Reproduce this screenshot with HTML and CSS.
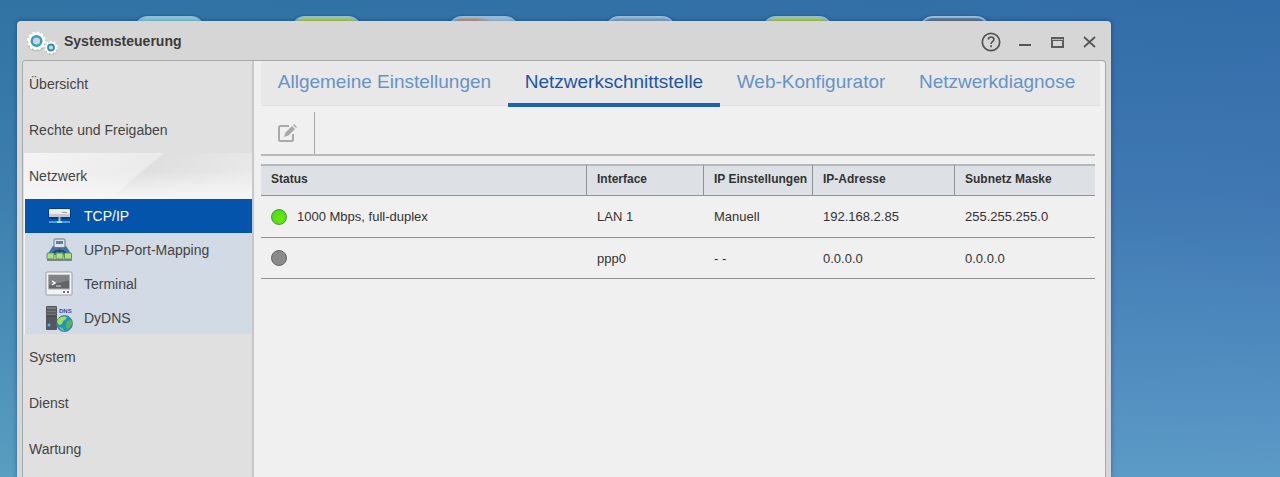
FILE: index.html
```html
<!DOCTYPE html>
<html lang="de">
<head>
  <meta charset="UTF-8" />
  <meta name="viewport" content="width=device-width, initial-scale=1.0"/>
  <title>Systemsteuerung</title>
  <link rel="stylesheet" href="styles.css">
</head>
<body>
  <div class="desktop">
    <!-- Desktop shortcuts, mostly hidden behind the window -->
    <div class="shortcuts">
      <span class="shortcut teal"></span>
      <span class="shortcut green"></span>
      <span class="shortcut orange"></span>
      <span class="shortcut steel"></span>
      <span class="shortcut green"></span>
      <span class="shortcut dark"></span>
    </div>

    <div class="window">
      <header class="titlebar">
        <svg class="app-icon" width="32" height="26" viewBox="0 0 32 26">
          <g class="gear-shadow">
            <circle cx="10.5" cy="12" r="9.5" />
            <circle cx="25" cy="18.5" r="6.5" />
          </g>
          <circle cx="10.5" cy="11" r="8.5" fill="none" stroke="#fff" stroke-width="2" stroke-dasharray="2.5 1.95" />
          <circle cx="10.5" cy="11" r="6" fill="#d6cfe0" stroke="#fff" stroke-width="5" />
          <circle cx="10.5" cy="11" r="4.8" fill="#d6cfe0" stroke="#2fa3b5" stroke-width="2.4" />
          <circle cx="25" cy="17.5" r="5.8" fill="none" stroke="#fff" stroke-width="2" stroke-dasharray="2 1.64" />
          <circle cx="25" cy="17.5" r="4" fill="#d6cfe0" stroke="#fff" stroke-width="3" />
          <circle cx="25" cy="17.5" r="3" fill="#d6cfe0" stroke="#2b93aa" stroke-width="1.8" />
        </svg>
        <h1>Systemsteuerung</h1>
        <div class="window-buttons">
          <button type="button" aria-label="Hilfe">
            <svg width="20" height="20" viewBox="0 0 20 20" fill="none" stroke="#555" stroke-width="1.7">
              <circle cx="10" cy="10" r="8.7" />
              <path d="M7.2 7.5C7.5 5.7 8.6 5 10.1 5c1.7 0 2.8 1 2.8 2.4 0 2.2-2.8 2.3-2.8 4.5" />
              <path d="M10.1 13.3v2" />
            </svg>
          </button>
          <button type="button" aria-label="Minimieren">
            <svg width="14" height="14" viewBox="0 0 14 14"><path d="M0 9h12v2H0z" fill="#555" /></svg>
          </button>
          <button type="button" aria-label="Maximieren">
            <svg width="14" height="14" viewBox="0 0 14 14"><path d="M0 2h13v11H0zM2 6v5h9V6z" fill="#5c5c5c" fill-rule="evenodd" /><path d="M1 4.5h11" stroke="#bbb" /></svg>
          </button>
          <button type="button" aria-label="Schließen">
            <svg width="14" height="14" viewBox="0 0 14 14"><path d="M1 2l11 10M12 2L1 12" stroke="#555" stroke-width="1.7" /></svg>
          </button>
        </div>
      </header>

      <div class="content">
        <nav class="sidebar">
          <a href="#" class="group">Übersicht</a>
          <a href="#" class="group">Rechte und Freigaben</a>
          <a href="#" class="group open">Netzwerk</a>
          <div class="submenu">
            <a href="#" class="item active">
              <svg width="28" height="28" viewBox="0 0 28 28">
                <rect x="3" y="6" width="23" height="11" rx="3" fill="#082c5a" opacity=".6" />
                <rect x="4" y="7" width="21" height="8" rx="1" fill="#ececef" />
                <path d="M4 12h21v3H4z" fill="#c6c8ce" />
                <path d="M17 10.5h5" stroke="#999" />
                <path d="M14.5 15v4" stroke="#8cc6ee" stroke-width="2" />
                <path d="M4 20h8M17 20h8" stroke="#63b5ee" stroke-width="1.5" />
                <path d="M12 20h5" stroke="#b9dcf2" stroke-width="2" />
              </svg>
              TCP/IP
            </a>
            <a href="#" class="item">
              <svg width="28" height="28" viewBox="0 0 28 28">
                <path d="M8 10h13l6 9H2z" fill="#3c74a8" />
                <path d="M14.5 11v8M6 19l5-4h7l5 4" fill="none" stroke="#17446f" stroke-width="1.5" />
                <rect x="9" y="3" width="11" height="9" rx="1" fill="#dce5ed" stroke="#66798b" />
                <rect x="11" y="5" width="7" height="3" fill="#5780aa" />
                <path d="M8 12h13" stroke="#536d84" stroke-width="1.5" />
                <path d="M2 24h25" stroke="#78858d" stroke-width="2" />
                <g fill="#a7e67c" stroke="#66885f">
                  <rect x="2" y="17" width="7" height="6" rx="1" />
                  <rect x="11" y="17" width="7" height="6" rx="1" />
                  <rect x="19.5" y="17" width="7" height="6" rx="1" />
                </g>
              </svg>
              UPnP-Port-Mapping
            </a>
            <a href="#" class="item">
              <svg width="28" height="28" viewBox="0 0 28 28">
                <rect x="1" y="2" width="26" height="23" rx="1" fill="#f3f3f5" stroke="#9a9ea6" />
                <rect x="3.5" y="5" width="21" height="14" fill="#626468" stroke="#acaeb2" />
                <path d="M4 5.5h20v5L4 15z" fill="#808286" />
                <path d="M7 11l3 2-3 2" fill="none" stroke="#fff" stroke-width="1.5" />
                <path d="M11 16h5" stroke="#ddd" />
                <path d="M18 22h2M22 22h2" stroke="#806b78" stroke-width="2" />
              </svg>
              Terminal
            </a>
            <a href="#" class="item">
              <svg width="28" height="28" viewBox="0 0 28 28">
                <rect x="1" y="2" width="11" height="24" rx="1" fill="#55575b" />
                <path d="M2 3h9v8H2z" fill="#77797d" />
                <path d="M2 6h9M2 9h9M2 12h9" stroke="#424448" />
                <circle cx="4" cy="21" r="1.5" fill="#43b6ff" />
                <circle cx="19.5" cy="19.5" r="8" fill="#2394bd" stroke="#41738c" stroke-width=".8" />
                <path d="M13 15c3-3 7-3 9-2l-2 3-2 1-1 3-3 1-2-3z" fill="#a5df54" />
                <path d="M22 17l4-1 1 4-4 6-2-3z" fill="#56b954" />
                <path d="M14 23l4 1 1 3c-2 0-4-2-5-4z" fill="#5ecb92" />
                <text x="14" y="9" class="dns">DNS</text>
              </svg>
              DyDNS
            </a>
          </div>
          <a href="#" class="group">System</a>
          <a href="#" class="group">Dienst</a>
          <a href="#" class="group">Wartung</a>
        </nav>

        <main class="panel">
          <nav class="tabs">
            <a href="#">Allgemeine Einstellungen</a>
            <a href="#" class="active">Netzwerkschnittstelle</a>
            <a href="#">Web-Konfigurator</a>
            <a href="#">Netzwerkdiagnose</a>
          </nav>

          <div class="toolbar">
            <button type="button" aria-label="Bearbeiten">
              <svg width="20" height="20" viewBox="0 0 20 20">
                <path d="M12 3H3.500Q2 3 2 4.500v12Q2 18 3.500 18h11q1.500 0 1.500-1.500V11" fill="none" stroke="#aaa" stroke-width="2" />
                <path d="M7 14l1.500-4.500L15 3l3 3-6.500 6.500z" fill="#a8a8a8" />
                <path d="M16 2l1-1 3 3-1 1z" fill="#a8a8a8" />
              </svg>
            </button>
          </div>

          <table>
            <colgroup>
              <col><col class="col-interface"><col class="col-settings"><col class="col-address"><col class="col-mask">
            </colgroup>
            <thead>
              <tr>
                <th>Status</th>
                <th>Interface</th>
                <th>IP Einstellungen</th>
                <th>IP-Adresse</th>
                <th>Subnetz Maske</th>
              </tr>
            </thead>
            <tbody>
              <tr>
                <td><div class="state"><span class="led on"></span>1000 Mbps, full-duplex</div></td>
                <td>LAN 1</td>
                <td>Manuell</td>
                <td>192.168.2.85</td>
                <td>255.255.255.0</td>
              </tr>
              <tr>
                <td><div class="state"><span class="led"></span></div></td>
                <td>ppp0</td>
                <td>- -</td>
                <td>0.0.0.0</td>
                <td>0.0.0.0</td>
              </tr>
            </tbody>
          </table>
        </main>
      </div>
    </div>
  </div>
</body>
</html>
```
FILE: styles.css
```css
* {
  margin: 0;
  padding: 0;
  box-sizing: border-box;
}

body {
  font-family: "Liberation Sans", Arial, sans-serif;
  font-size: 14px;
  color: #444;
}

a {
  color: inherit;
  text-decoration: none;
}

button {
  border: none;
  background: none;
  cursor: pointer;
}

svg {
  display: block;
}

.desktop {
  position: relative;
  display: flex;
  height: 100vh;
  padding: 21px 169px 0 17px;
  overflow: hidden;
  background: linear-gradient(90deg, rgba(50, 140, 160, 0.25), rgba(60, 110, 180, 0.2)), linear-gradient(#306ca5, #4079b2 40%, #64a5cc);
}

.shortcuts {
  position: absolute;
  top: 16px;
  left: 134px;
  display: flex;
  gap: 86px;
}

.shortcut {
  width: 71px;
  height: 71px;
  border: 2px solid #8fc3e6;
  border-radius: 14px;
  box-shadow: 0 0 3px rgba(0, 40, 80, 0.4);
}

.teal {
  background: #8acfd6;
}

.green {
  background: #b0d262;
}

.orange {
  background: linear-gradient(90deg, #b9a096 40%, #a9c3de 60%);
}

.steel {
  background: #8eabc4;
}

.dark {
  background: #687b90;
}

.window {
  position: relative;
  display: flex;
  flex-direction: column;
  flex: 1;
  padding: 0 5px;
  border-radius: 4px 4px 0 0;
  background: #d6d6d6;
  box-shadow: 0 0 5px rgba(0, 20, 50, 0.4);
}

.titlebar {
  display: flex;
  align-items: center;
  height: 39px;
  padding: 0 9px 0 4px;
}

.titlebar h1 {
  margin-left: 6px;
  font-size: 14px;
  color: #3c3c3c;
}

.app-icon {
  margin-top: 4px;
}

.gear-shadow {
  fill: #8d9598;
  opacity: 0.4;
}

.window-buttons {
  display: flex;
  align-items: center;
  gap: 18px;
  margin-left: auto;
  margin-top: 2px;
}

.content {
  display: flex;
  flex: 1;
  border: 1px solid #a8a8a8;
  border-bottom: none;
  border-radius: 4px 4px 0 0;
  background: #f0f0f0;
  overflow: hidden;
}

.sidebar {
  width: 231px;
  flex-shrink: 0;
  padding-left: 1px;
  border-right: 2px solid #c8c8c8;
  background: #e0e0e0;
}

.group {
  display: flex;
  align-items: center;
  height: 46px;
  padding-left: 5px;
}

.group.open {
  background: linear-gradient(rgba(246, 246, 246, 0) 40%, #f6f6f6), linear-gradient(140deg, #f4f4f4, #ebebeb 49%, #dfdfdf 50%, #ececec);
}

.submenu {
  border-left: 1px solid #f4f4f4;
}

.item {
  display: flex;
  align-items: center;
  gap: 11px;
  height: 34px;
  padding-left: 20px;
  background: #d2dae6;
}

.item:last-child {
  height: 33px;
}

.item.active {
  background: #0454ab;
  color: #fff;
}

.dns {
  font-size: 6px;
  font-weight: bold;
  fill: #3547b5;
}

.panel {
  flex: 1;
  padding: 0 5px 0 7px;
}

.tabs {
  display: flex;
  height: 45px;
  padding-right: 8px;
  border-bottom: 1px solid #e2e2e2;
  background: #e8e8e8;
  font-size: 19px;
  color: #6693c7;
}

.tabs a {
  flex: 1 1 auto;
  height: 46px;
  line-height: 42px;
  text-align: center;
}

.tabs .active {
  border-bottom: 4px solid #1c61b3;
  color: #1d56a5;
}

.toolbar {
  display: flex;
  height: 44px;
  margin: 6px 5px 8px 0;
  border-bottom: 2px solid #b9b9b9;
}

.toolbar button {
  width: 54px;
  padding-left: 16px;
  border-right: 1px solid #a8a8a8;
}

table {
  width: calc(100% - 5px);
  table-layout: fixed;
  border-collapse: separate;
  border-spacing: 0;
  font-size: 13px;
  color: #333;
}

.col-interface {
  width: 117px;
}

.col-settings {
  width: 109px;
}

.col-address {
  width: 142px;
}

.col-mask {
  width: 140px;
}

th,
td {
  padding-left: 10px;
  border-bottom: 1px solid #919191;
  text-align: left;
  white-space: nowrap;
}

th {
  height: 32px;
  padding-bottom: 4px;
  border-top: 2px solid #b5b8bb;
  border-right: 1px solid #8e9298;
  background: #dde1e6;
  font-size: 12px;
}

th:last-child {
  border-right: none;
}

td {
  height: 42px;
}

tr:last-child td {
  height: 41px;
}

.state {
  display: flex;
  align-items: center;
  gap: 10px;
}

.led {
  width: 16px;
  height: 16px;
  border: 1px solid #666;
  border-radius: 50%;
  background: #8a8a8a;
}

.led.on {
  border-color: #4a9a35;
  background: radial-gradient(circle at 60% 60%, #6bea08, #42d326);
}
```
